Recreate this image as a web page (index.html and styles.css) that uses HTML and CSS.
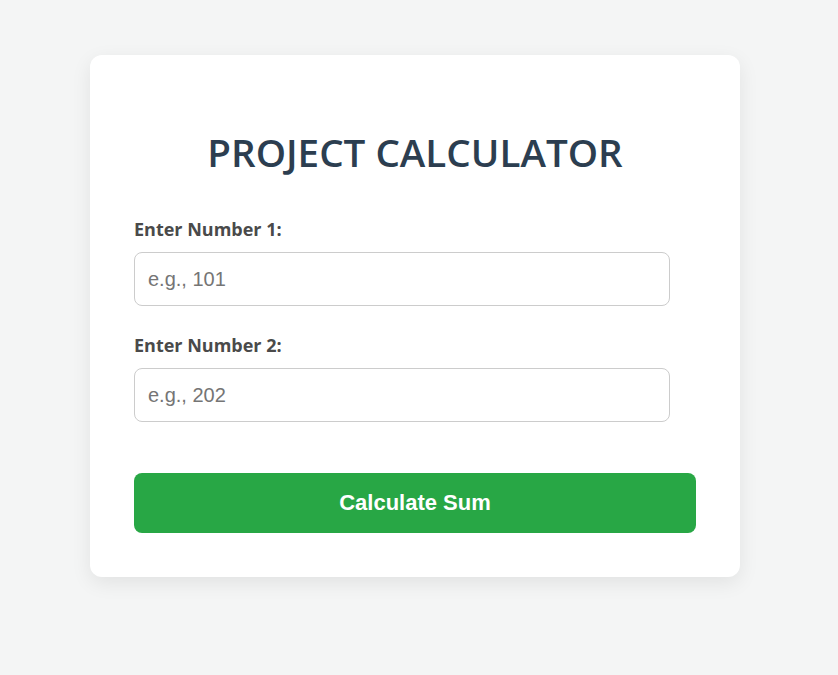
FILE: index.html
```html
<!DOCTYPE html>
<html lang="en">
<head>
<meta charset="utf-8">
<title>Project Calculator</title>
<link rel="stylesheet" href="styles.css">
</head>
<body>
<main class="card">
  <h1 class="title">PROJECT CALCULATOR</h1>
  <div class="field">
    <label class="label" for="n1">Enter Number 1:</label>
    <input class="input" id="n1" type="number" placeholder="e.g., 101">
  </div>
  <div class="field">
    <label class="label" for="n2">Enter Number 2:</label>
    <input class="input" id="n2" type="number" placeholder="e.g., 202">
  </div>
  <button class="btn" type="button">Calculate Sum</button>
</main>
</body>
</html>
```

FILE: styles.css
```css
* { box-sizing: border-box; }
html, body { margin: 0; }
body {
  background: #f4f5f5;
  font-family: "Open Sans", "Noto Sans", sans-serif;
  min-height: 675px;
  display: flex;
  justify-content: center;
  align-items: flex-start;
  padding: 55px 8px 0 0;
}
.card {
  width: 650px;
  background: #fff;
  border-radius: 12px;
  box-shadow: 0 6px 20px rgba(0, 0, 0, 0.08);
  padding: 40px 44px 44px;
}
.title {
  margin: 35px 0 0;
  text-align: center;
  font-size: 38.6px;
  line-height: 45px;
  font-weight: 600;
  color: #2c3e50;
}
.field {
  display: flex;
  flex-direction: column;
  align-items: flex-start;
}
.field + .field { margin-top: 28px; }
.label {
  margin-top: 43px;
  font-size: 18px;
  line-height: 23px;
  font-weight: 700;
  color: #4a4a4a;
  margin-bottom: 11px;
}
.field + .field .label { margin-top: 0; }
.input {
  width: 536px;
  height: 54px;
  border: 1px solid #ccc;
  border-radius: 8px;
  padding: 0 13px;
  font-family: "Liberation Sans", Arial, sans-serif;
  font-size: 20px;
  color: #333;
  background: #fff;
  outline: none;
}
.input::placeholder { color: #757575; }
.btn {
  display: block;
  width: 100%;
  height: 60px;
  margin-top: 51px;
  border: none;
  border-radius: 8px;
  background: #28a745;
  color: #fff;
  font-family: "Liberation Sans", Arial, sans-serif;
  font-size: 22px;
  font-weight: 700;
  cursor: pointer;
}
```
